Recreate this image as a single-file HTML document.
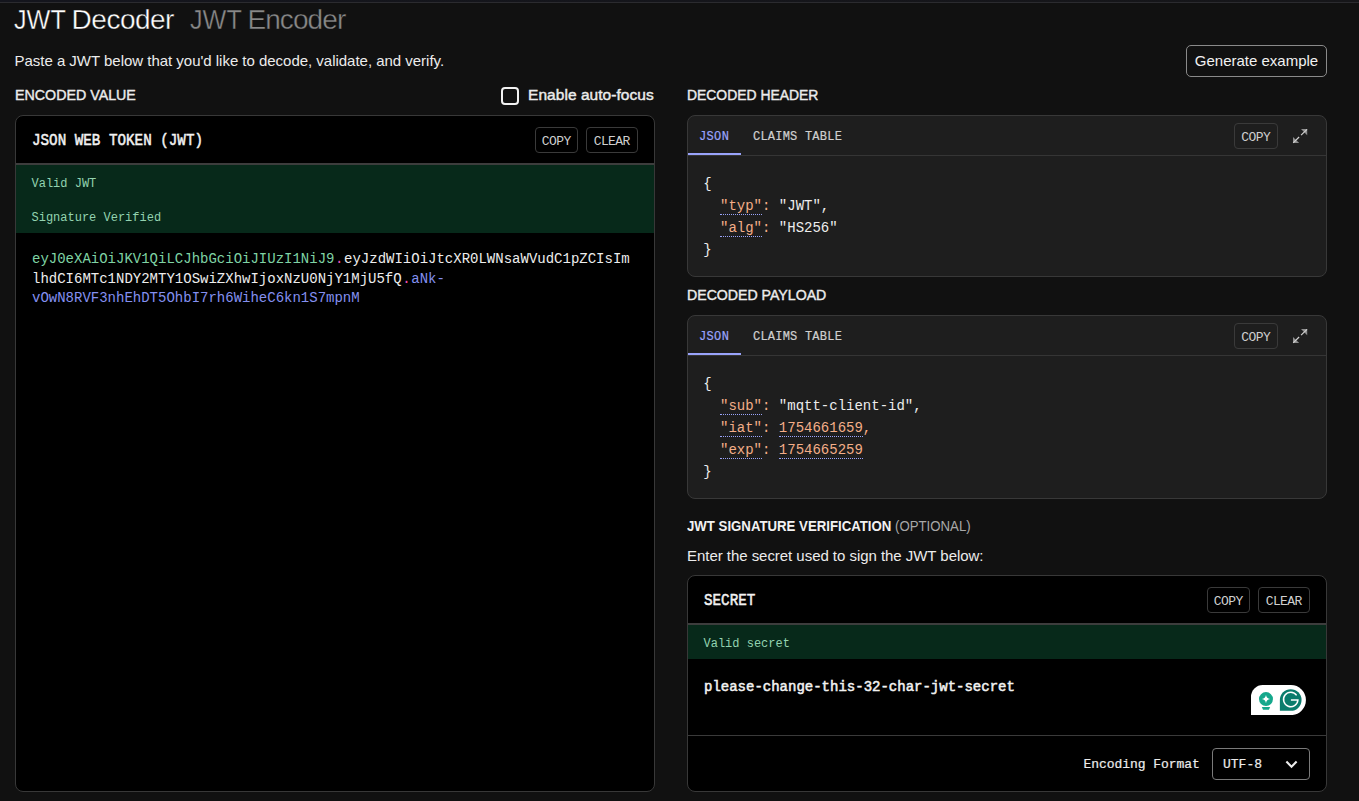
<!DOCTYPE html>
<html lang="en">
<head>
<meta charset="utf-8">
<title>JWT Decoder</title>
<style>
*{box-sizing:border-box;margin:0;padding:0}
html,body{width:1359px;height:801px;overflow:hidden;background:#111111}
body{position:relative;font-family:"Liberation Sans",sans-serif;color:#f0f0f0}
.abs{position:absolute;white-space:nowrap;line-height:1}
.sans{font-family:"Liberation Sans",sans-serif}
.mono{font-family:"Liberation Mono",monospace}
.topband{left:0;top:0;width:1359px;height:2px;background:linear-gradient(90deg,#14151d,#161619)}
.topline{left:0;top:2px;width:1359px;height:1px;background:#2b2b2f}
.h1{font-size:28px;top:6px;color:#fff;-webkit-text-stroke:0.4px #111}
.sx{transform:scaleX(.9);transform-origin:0 0}
.t15{font-size:15px}
.lbl{font-size:15.5px;color:#ececec;-webkit-text-stroke:0.42px #ececec}
.btn{border:1px solid #3a3a3a;border-radius:4px;color:#cfcfcf;font-family:"Liberation Mono",monospace;font-size:13px;letter-spacing:-0.6px;text-indent:-0.6px;text-align:center}
.panel{border:1px solid #383838;border-radius:8px;overflow:hidden}
.black{background:#000}
.dark{background:#1e1e1e}
.green{background:#07291a}
.gtxt{color:#93d3b0;font-size:12px}
.hr{height:1px;background:#3d3d3d}
.k{color:#f4ae88;border-bottom:1px dotted #99a3fa}
.w{color:#ededed}
.o{color:#f4ae88}
</style>
</head>
<body>
<div class="abs topband"></div>
<div class="abs topline"></div>

<!-- titles -->
<div class="abs sans h1 sx" id="t1a" style="left:14px">JWT</div>
<div class="abs sans h1" id="t1b" style="left:71.6px;letter-spacing:-0.5px">Decoder</div>
<div class="abs sans h1 sx" id="t2a" style="left:190px;color:#898989">JWT</div>
<div class="abs sans h1" id="t2b" style="left:247.4px;color:#898989;letter-spacing:-0.9px">Encoder</div>
<div class="abs sans t15" id="sub" style="left:14.5px;top:53px;color:#ececec;letter-spacing:-0.02px">Paste a JWT below that you'd like to decode, validate, and verify.</div>

<div class="abs sans t15" id="gen" style="left:1186px;top:45px;width:141px;height:32px;border:1px solid #8a8a8a;border-radius:5px;text-align:center;line-height:30px;color:#f2f2f2">Generate example</div>

<!-- left column -->
<div class="abs sans lbl" id="encl" style="left:14.5px;top:87.4px;transform:scaleX(.919);transform-origin:0 0">ENCODED VALUE</div>
<div class="abs" id="cb" style="left:501px;top:87px;width:18px;height:18px;border:2px solid #f2f2f2;border-radius:4px"></div>
<div class="abs sans lbl" id="af" style="left:528px;top:87.4px;letter-spacing:0.05px">Enable auto-focus</div>

<div class="abs panel black" id="p1" style="left:15px;top:115px;width:640px;height:677px">
  <div class="abs mono" id="p1t" style="left:16px;top:18px;font-size:14.25px;transform:scaleY(1.19);transform-origin:0 76.600%;-webkit-text-stroke:0.45px #f2f2f2;color:#f2f2f2">JSON WEB TOKEN (JWT)</div>
  <div class="abs btn" id="p1copy" style="left:519px;top:11px;width:43px;height:26px;line-height:27px">COPY</div>
  <div class="abs btn" id="p1clear" style="left:570px;top:11px;width:52px;height:26px;line-height:27px">CLEAR</div>
  <div class="abs hr" style="left:0;top:47px;width:640px;height:2px"></div>
  <div class="abs green" style="left:0;top:49px;width:640px;height:68px"></div>
  <div class="abs mono gtxt" id="v1" style="left:15.5px;top:62px">Valid JWT</div>
  <div class="abs mono gtxt" id="v2" style="left:15.5px;top:96px">Signature Verified</div>
  <div class="abs mono" id="jwt" style="left:16px;top:134px;font-size:14px;line-height:19.5px;white-space:pre"><span style="color:#7fd3a4">eyJ0eXAiOiJKV1QiLCJhbGciOiJIUzI1NiJ9</span><span style="color:#f052b4;margin:0 .6px">.</span><span class="w">eyJzdWIiOiJtcXR0LWNsaWVudC1pZCIsIm
lhdCI6MTc1NDY2MTY1OSwiZXhwIjoxNzU0NjY1MjU5fQ</span><span style="color:#f052b4;margin:0 .6px">.</span><span style="color:#8490f0">aNk-
vOwN8RVF3nhEhDT5OhbI7rh6WiheC6kn1S7mpnM</span></div>
</div>

<!-- right column -->
<div class="abs sans lbl" id="dh" style="left:686.6px;top:87.4px;transform:scaleX(.897);transform-origin:0 0">DECODED HEADER</div>
<div class="abs panel dark" id="p2" style="left:687px;top:115px;width:640px;height:162px">
  <div class="abs mono" id="p2j" style="left:11px;top:15px;letter-spacing:.35px;-webkit-text-stroke:.2px #99a3fa;font-size:12px;color:#99a3fa">JSON</div>
  <div class="abs mono" id="p2c" style="left:65px;top:15px;letter-spacing:.22px;-webkit-text-stroke:.2px #cfcfcf;font-size:12px;color:#cfcfcf">CLAIMS TABLE</div>
  <div class="abs btn" id="p2copy" style="left:546px;top:7px;width:44px;height:26px;line-height:28px">COPY</div>
  <svg class="abs" id="p2x" style="left:604px;top:12px" width="16" height="16" viewBox="0 0 16 16"><path d="M9 1.100H15.200V7.300ZM1 8.900V15.100H7.200Z" fill="#8e8e8e"/><path d="M15 1.300L9.100 7.200M1.200 14.900L7.100 9" stroke="#d0d0d0" stroke-width="1.200" fill="none"/></svg>
  <div class="abs hr" style="left:0;top:39px;width:640px;background:#353535"></div>
  <div class="abs" style="left:0;top:37px;width:53px;height:2px;background:#99a3fa"></div>
  <div class="abs mono" id="p2json" style="left:15.2px;top:57px;font-size:14px;line-height:22px;white-space:pre"><span class="w">{
  <span class="k">"typ"</span><span class="o">:</span> "JWT",
  <span class="k">"alg"</span><span class="o">:</span> "HS256"
}</span></div>
</div>

<div class="abs sans lbl" id="dp" style="left:686.6px;top:287.4px;transform:scaleX(.912);transform-origin:0 0">DECODED PAYLOAD</div>
<div class="abs panel dark" id="p3" style="left:687px;top:315px;width:640px;height:184px">
  <div class="abs mono" id="p3j" style="left:11px;top:15px;letter-spacing:.35px;-webkit-text-stroke:.2px #99a3fa;font-size:12px;color:#99a3fa">JSON</div>
  <div class="abs mono" id="p3c" style="left:65px;top:15px;letter-spacing:.22px;-webkit-text-stroke:.2px #cfcfcf;font-size:12px;color:#cfcfcf">CLAIMS TABLE</div>
  <div class="abs btn" id="p3copy" style="left:546px;top:7px;width:44px;height:26px;line-height:28px">COPY</div>
  <svg class="abs" id="p3x" style="left:604px;top:12px" width="16" height="16" viewBox="0 0 16 16"><path d="M9 1.100H15.200V7.300ZM1 8.900V15.100H7.200Z" fill="#8e8e8e"/><path d="M15 1.300L9.100 7.200M1.200 14.900L7.100 9" stroke="#d0d0d0" stroke-width="1.200" fill="none"/></svg>
  <div class="abs hr" style="left:0;top:39px;width:640px;background:#353535"></div>
  <div class="abs" style="left:0;top:37px;width:53px;height:2px;background:#99a3fa"></div>
  <div class="abs mono" id="p3json" style="left:15.2px;top:57px;font-size:14px;line-height:22px;white-space:pre"><span class="w">{
  <span class="k">"sub"</span><span class="o">:</span> "mqtt-client-id",
  <span class="k">"iat"</span><span class="o">:</span> <span class="k">1754661659</span><span class="o">,</span>
  <span class="k">"exp"</span><span class="o">:</span> <span class="k">1754665259</span>
}</span></div>
</div>

<div class="abs sans" id="sv" style="left:687px;top:519px;font-size:14px;color:#f2f2f2;transform:scaleX(.944);transform-origin:0 0"><b>JWT SIGNATURE VERIFICATION</b> <span style="color:#a8a8a8">(OPTIONAL)</span></div>
<div class="abs sans t15" id="es" style="left:687px;top:548px;color:#ececec;letter-spacing:-0.04px">Enter the secret used to sign the JWT below:</div>

<div class="abs panel black" id="p4" style="left:687px;top:575px;width:640px;height:217px">
  <div class="abs mono" id="p4t" style="left:16px;top:18px;font-size:14.25px;transform:scaleY(1.19);transform-origin:0 76.600%;-webkit-text-stroke:0.45px #f2f2f2;color:#f2f2f2">SECRET</div>
  <div class="abs btn" id="p4copy" style="left:519px;top:11px;width:43px;height:26px;line-height:27px">COPY</div>
  <div class="abs btn" id="p4clear" style="left:570px;top:11px;width:52px;height:26px;line-height:27px">CLEAR</div>
  <div class="abs hr" style="left:0;top:47px;width:640px;height:2px"></div>
  <div class="abs green" style="left:0;top:49px;width:640px;height:34px"></div>
  <div class="abs mono gtxt" id="v3" style="left:15.5px;top:62px">Valid secret</div>
  <div class="abs mono" id="sec" style="left:16px;top:104px;font-size:14px;-webkit-text-stroke:0.5px #f2f2f2;color:#f2f2f2">please-change-this-32-char-jwt-secret</div>
  <div class="abs hr" style="left:0;top:159px;width:640px;background:#3a3a3a"></div>
  <div class="abs mono" id="ef" style="left:395.5px;top:182px;font-size:13px;-webkit-text-stroke:.2px #ececec;letter-spacing:-0.06px;color:#ececec">Encoding Format</div>
  <div class="abs" id="sel" style="left:524px;top:172px;width:98px;height:32px;border:1px solid #7a7a7a;border-radius:4px"></div>
  <div class="abs mono" id="utf" style="left:535px;top:182px;font-size:13px;-webkit-text-stroke:.2px #ececec;color:#ececec">UTF-8</div>
  <svg class="abs" id="chev" style="left:596.500px;top:184.100px" width="13" height="9" viewBox="0 0 13 9"><path d="M1.400 1.600L6.500 6.700L11.600 1.600" fill="none" stroke="#ececec" stroke-width="2.100"/></svg>
  <!-- grammarly -->
  <svg class="abs" id="gram" style="left:563px;top:109px" width="55.2" height="30.2" viewBox="0 0 56 30.600" preserveAspectRatio="none">
    <path d="M12 0H40.5A15.25 15.25 0 0 1 40.5 30.5H0V12A12 12 0 0 1 12 0Z" fill="#fff"/>
    <circle cx="15.2" cy="14.3" r="7.1" fill="#15a88c"/>
    <path d="M11 22.400h8.400l-1.200 2.600h-6z" fill="#15a88c"/>
    <path d="M15.2 10.2q.6 3.5 4.1 4.1q-3.5 .6-4.1 4.1q-.6-3.500-4.100-4.100q3.500-.6 4.100-4.100z" fill="#fff"/>
    <path d="M40.300 4.200a11 11 0 1 1 0 22H29.300V15.200a11 11 0 0 1 11-11z" fill="#0a7c6c"/>
    <path d="M46.300 10.500a7.300 7.300 0 1 0 1.300 4.700H40.500" fill="none" stroke="#fff" stroke-width="1.500"/>
  </svg>
</div>
</body>
</html>
